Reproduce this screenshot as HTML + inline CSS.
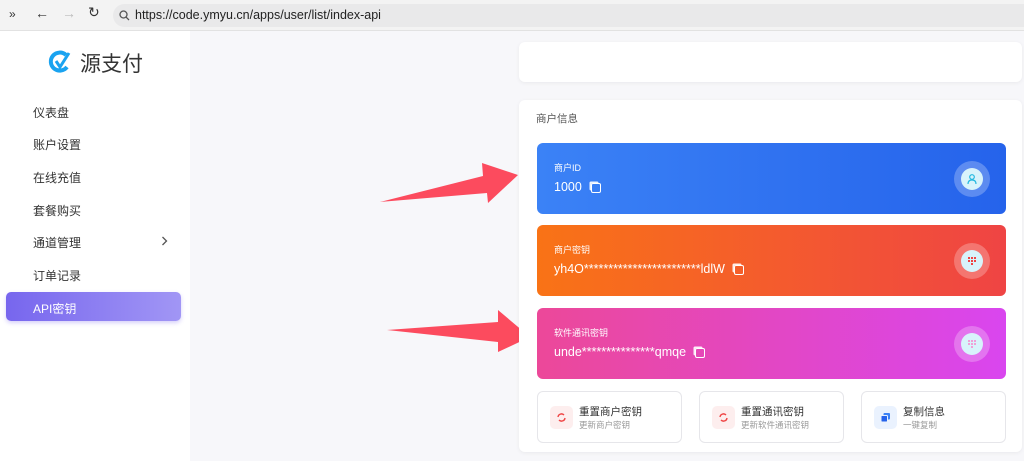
<!DOCTYPE html><html><head><meta charset="utf-8"><style>
*{box-sizing:border-box;margin:0;padding:0}
body{width:1024px;height:461px;overflow:hidden;background:#f7f7fa;font-family:"Liberation Sans","Noto Sans CJK SC",sans-serif;position:relative}
.top{position:absolute;left:0;top:0;width:1024px;height:31px;background:#f3f3f3;border-bottom:1px solid #e2e2e2}
.url{position:absolute;left:113px;top:4px;width:911px;height:23px;background:#e9e9ea;border-radius:12px 0 0 12px;font-size:12.5px;color:#222;line-height:23px;padding-left:22px}
.side{position:absolute;left:0;top:31px;width:190px;height:430px;background:#fff}
.mi{position:absolute;left:33px;font-size:12px;color:#333}
.card{position:absolute;left:519px;width:503px;background:#fff;border-radius:6px;box-shadow:0 1px 4px rgba(0,0,0,.06)}
.k{position:absolute;left:537px;width:469px;height:71px;border-radius:6px;color:#fff}
.k .l{position:absolute;left:17px;top:18px;font-size:9px}
.k .v{position:absolute;left:17px;top:37px;font-size:12.5px}
.cp{display:inline-block;width:10px;height:10px;border:1.5px solid #fff;border-radius:2px;margin-left:9px;position:relative;top:2px;box-shadow:-2px -2px 0 -0.5px rgba(255,255,255,.9)}
.ic{position:absolute;right:16px;top:18px;width:36px;height:36px;border-radius:50%;background:rgba(255,255,255,.25)}
.ic i{position:absolute;left:7px;top:7px;width:22px;height:22px;border-radius:50%;background:#d8f3fb}
.ic svg{position:absolute;left:12px;top:12px}
.b{position:absolute;top:391px;width:145px;height:52px;border:1px solid #e6e6ea;border-radius:6px;background:#fff}
.b .s{position:absolute;left:12px;top:14px;width:23px;height:23px;border-radius:5px;background:#fdeeee}
.b .s svg{position:absolute;left:6px;top:6px}
.b .t{position:absolute;left:41px;top:12px;font-size:10.5px;color:#333}
.b .u{position:absolute;left:41px;top:27px;font-size:8.5px;color:#999}
</style></head><body>
<div class="top">
<span style="position:absolute;left:9px;top:7px;font-size:12px;color:#333">»</span>
<span style="position:absolute;left:35px;top:5px;font-size:14px;color:#333">←</span>
<span style="position:absolute;left:62px;top:5px;font-size:14px;color:#bbb">→</span>
<span style="position:absolute;left:88px;top:4px;font-size:14px;color:#333">↻</span>
<div class="url"><svg style="position:absolute;left:6px;top:6px" width="11" height="11" viewBox="0 0 11 11"><circle cx="4.5" cy="4.5" r="3.5" fill="none" stroke="#555" stroke-width="1.3"/><path d="M7 7l3 3" stroke="#555" stroke-width="1.3"/></svg>https://code.ymyu.cn/apps/user/list/index-api</div>
</div>
<div class="side">
<svg style="position:absolute;left:46px;top:18px" width="26" height="26" viewBox="0 0 26 26"><path d="M20 6A9 9 0 1 0 21 18" fill="none" stroke="#1aa3f0" stroke-width="4"/><path d="M10 12l4 6 9-14" fill="none" stroke="#1aa3f0" stroke-width="3"/></svg>
<span style="position:absolute;left:80px;top:17px;font-size:21px;color:#333">源支付</span>
<span class="mi" style="top:73px">仪表盘</span>
<span class="mi" style="top:105px">账户设置</span>
<span class="mi" style="top:138px">在线充值</span>
<span class="mi" style="top:171px">套餐购买</span>
<span class="mi" style="top:203px">通道管理</span>
<svg style="position:absolute;left:161px;top:205px" width="7" height="10" viewBox="0 0 7 10"><path d="M1.5 1l4 4-4 4" fill="none" stroke="#555" stroke-width="1.3"/></svg>
<span class="mi" style="top:236px">订单记录</span>
<div style="position:absolute;left:6px;top:261px;width:175px;height:29px;border-radius:5px;background:linear-gradient(90deg,#7766ee,#a196f5);box-shadow:0 2px 4px rgba(120,100,240,.3)"></div>
<span class="mi" style="top:269px;color:#fff">API密钥</span>
</div>
<svg style="position:absolute;left:0;top:0" width="1024" height="461"><polygon points="380,202 483,176 482,163 518,175 488,203 487,193" fill="#fc4b5e"/><polygon points="387,330 498,322 498,310 530,337 498,352 498,342" fill="#fc4b5e"/></svg>
<div class="card" style="top:42px;height:40px"></div>
<div class="card" style="top:100px;height:352px"><span style="position:absolute;left:17px;top:11px;font-size:10.5px;color:#555">商户信息</span></div>
<div class="k" style="top:143px;background:linear-gradient(90deg,#3b82f6,#2563eb)"><span class="l">商户ID</span><span class="v">1000<span class="cp"></span></span><div class="ic"><i></i><svg width="12" height="12" viewBox="0 0 12 12"><circle cx="6" cy="4" r="2.3" fill="none" stroke="#22b8e0" stroke-width="1.2"/><path d="M2 11c0-3 2-4 4-4s4 1 4 4" fill="none" stroke="#22b8e0" stroke-width="1.2"/></svg></div></div>
<div class="k" style="top:225px;background:linear-gradient(90deg,#f97316,#ef4444)"><span class="l">商户密钥</span><span class="v">yh4O************************ldlW<span class="cp"></span></span><div class="ic"><i></i><svg width="12" height="12" viewBox="0 0 12 12" fill="#ef4444"><rect x="2" y="2" width="2" height="2"/><rect x="5" y="2" width="2" height="2"/><rect x="8" y="2" width="2" height="2"/><rect x="2" y="5" width="2" height="2"/><rect x="5" y="5" width="2" height="2"/><rect x="8" y="5" width="2" height="2"/><rect x="5" y="8" width="2" height="2"/></svg></div></div>
<div class="k" style="top:308px;background:linear-gradient(90deg,#ec4899,#d946ef)"><span class="l">软件通讯密钥</span><span class="v">unde***************qmqe<span class="cp"></span></span><div class="ic"><i></i><svg width="12" height="12" viewBox="0 0 12 12" fill="#f0a0d8"><rect x="2" y="2" width="2" height="2"/><rect x="5" y="2" width="2" height="2"/><rect x="8" y="2" width="2" height="2"/><rect x="2" y="5" width="2" height="2"/><rect x="5" y="5" width="2" height="2"/><rect x="8" y="5" width="2" height="2"/><rect x="5" y="8" width="2" height="2"/></svg></div></div>
<div class="b" style="left:537px"><div class="s"><svg width="11" height="11" viewBox="0 0 11 11"><path d="M2 5a3.5 3.5 0 0 1 6-2M9 6a3.5 3.5 0 0 1-6 2" fill="none" stroke="#ef4444" stroke-width="1.4"/></svg></div><span class="t">重置商户密钥</span><span class="u">更新商户密钥</span></div>
<div class="b" style="left:699px"><div class="s"><svg width="11" height="11" viewBox="0 0 11 11"><path d="M2 5a3.5 3.5 0 0 1 6-2M9 6a3.5 3.5 0 0 1-6 2" fill="none" stroke="#ef4444" stroke-width="1.4"/></svg></div><span class="t">重置通讯密钥</span><span class="u">更新软件通讯密钥</span></div>
<div class="b" style="left:861px"><div class="s" style="background:#eaf2fe"><svg width="11" height="11" viewBox="0 0 11 11"><rect x="3.5" y="1" width="6.5" height="6.5" rx="1" fill="#3b82f6"/><rect x="1" y="3.5" width="6.5" height="6.5" rx="1" fill="#2563eb" stroke="#eaf2fe"/></svg></div><span class="t">复制信息</span><span class="u">一键复制</span></div>
</body></html>
